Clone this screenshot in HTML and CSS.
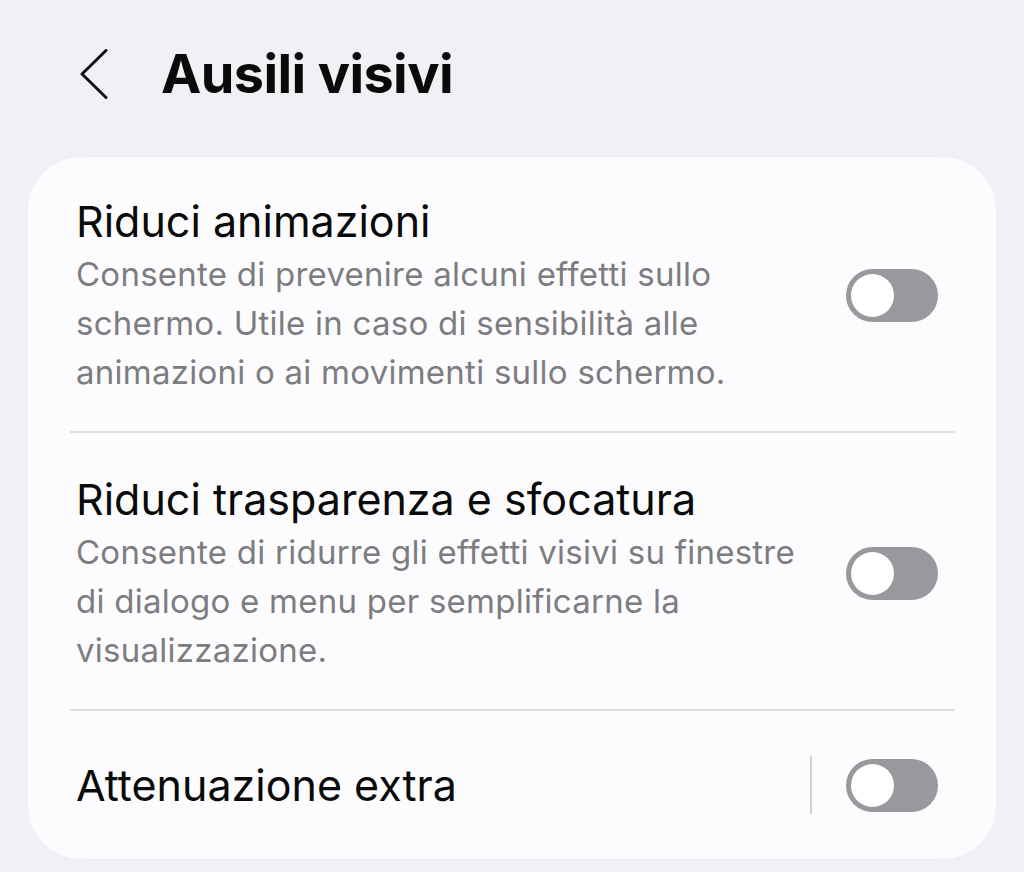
FILE: index.html
```html
<!DOCTYPE html>
<html lang="it">
<head>
  <meta charset="UTF-8">
  <title>Ausili visivi</title>
  <link rel="stylesheet" href="styles.css">
</head>
<body>

  <div class="header">
    <svg class="back" width="28" height="50" viewBox="0 0 28 50">
      <path d="M26 1.5 L2 25 L26 48.5" fill="none" stroke="#111" stroke-width="3" stroke-linecap="round" stroke-linejoin="round"/>
    </svg>
    <h1>Ausili visivi</h1>
  </div>

  <div class="card">
    <div class="item">
      <div class="text">
        <div class="title">Riduci animazioni</div>
        <div class="desc">Consente di prevenire alcuni effetti sullo schermo. Utile in caso di sensibilità alle animazioni o ai movimenti sullo schermo.</div>
      </div>
      <div class="switch"><span class="knob"></span></div>
    </div>
    <div class="item">
      <div class="text">
        <div class="title">Riduci trasparenza e sfocatura</div>
        <div class="desc">Consente di ridurre gli effetti visivi su finestre di dialogo e menu per semplificarne la visualizzazione.</div>
      </div>
      <div class="switch"><span class="knob"></span></div>
    </div>
    <div class="item single">
      <div class="text">
        <div class="title">Attenuazione extra</div>
      </div>
      <div class="divider"></div>
      <div class="switch"><span class="knob"></span></div>
    </div>
  </div>

</body>
</html>
```

FILE: styles.css
```css
body {
  margin: 0;
  background-color: #f1f1f5;
  font-family: Inter, "Noto Sans", sans-serif;
  color: #0a0a0a;
}
.header {
  display: flex;
  align-items: center;
  height: 157px;
  padding: 0 0 10px 80px;
  box-sizing: border-box;
}
.back {
  display: block;
}
.header h1 {
  margin: 0 0 0 53px;
  font-size: 54px;
  font-weight: 700;
  letter-spacing: -0.6px;
}
.card {
  margin: 0 28px;
  background-color: #fcfcfe;
  border-radius: 54px;
  padding: 0 41px 0 42px;
}
.item {
  display: flex;
  align-items: center;
  padding: 36px 17px 34px 6px;
  border-bottom: 2px solid #e0e0e4;
}
.item:nth-child(2) {
  padding-top: 38px;
}
.item.single {
  border-bottom: none;
  padding-top: 45px;
  padding-bottom: 45px;
}
.text {
  flex: 1;
}
.title {
  font-size: 43px;
  line-height: 56px;
  margin-bottom: 1px;
}
.desc {
  font-size: 33px;
  line-height: 49px;
  letter-spacing: 0.25px;
  color: #7d7d81;
}
.switch {
  position: relative;
  flex: none;
  width: 92px;
  height: 53px;
  margin-left: 40px;
  border-radius: 27px;
  background-color: #99989d;
}
.knob {
  position: absolute;
  left: 5px;
  top: 5px;
  width: 43px;
  height: 43px;
  border-radius: 50%;
  background-color: #fff;
}
.divider {
  width: 2px;
  height: 58px;
  background-color: #cfcfd3;
  margin-right: -6px;
}
```
